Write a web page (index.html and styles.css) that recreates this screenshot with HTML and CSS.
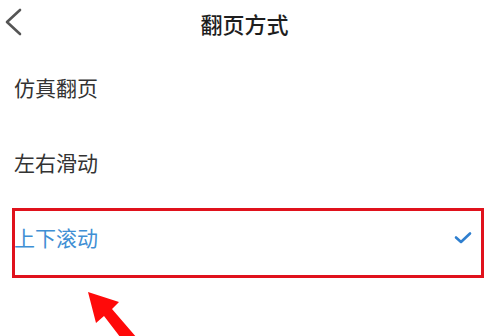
FILE: index.html
```html
<!DOCTYPE html>
<html lang="zh">
<head>
<meta charset="utf-8">
<link rel="stylesheet" href="styles.css">
</head>
<body>
<div class="page">
  <header class="topbar">
    <svg class="back" width="24" height="30" viewBox="0 0 24 30">
      <polyline points="17,3 4,15 17,27" fill="none" stroke="#555" stroke-width="2.6" stroke-linecap="round" stroke-linejoin="round"/>
    </svg>
    <h1 class="title">翻页方式</h1>
  </header>
  <ul class="options">
    <li class="option">仿真翻页</li>
    <li class="option">左右滑动</li>
    <li class="option selected">上下滚动
      <svg class="check" width="18" height="14" viewBox="0 0 18 14">
        <polyline points="2,6.5 7,11 16,2.5" fill="none" stroke="#2f7fcf" stroke-width="2.6" stroke-linecap="round" stroke-linejoin="round"/>
      </svg>
    </li>
  </ul>
  <div class="highlight"></div>
  <svg class="arrow" width="489" height="336" viewBox="0 0 489 336">
    <polygon points="88,292 119,302 112,309 137,338 127,346 104,316 96,323" fill="#ff0a0a"/>
  </svg>
</div>
</body>
</html>
```

FILE: styles.css
```css
* { box-sizing: border-box; }
html, body {
  margin: 0;
  padding: 0;
  background: #fff;
}
body {
  font-family: "Noto Sans CJK SC", "Noto Sans", sans-serif;
  width: 489px;
  height: 336px;
  overflow: hidden;
}
.page {
  position: relative;
  width: 489px;
  height: 336px;
}
.topbar {
  position: relative;
  height: 45px;
  display: flex;
  align-items: center;
  justify-content: center;
}
.back {
  position: absolute;
  left: 3px;
  top: 7px;
}
.title {
  margin: 0;
  font-size: 22px;
  font-weight: 500;
  color: #1e1e1e;
  line-height: 1;
}
.options {
  list-style: none;
  margin: 0;
  padding: 5px 0 0 0;
}
.option {
  height: 75px;
  display: flex;
  align-items: center;
  justify-content: space-between;
  padding: 0 17px 0 14px;
  font-size: 21px;
  color: #333;
  line-height: 1;
}
.option.selected {
  color: #3f8fd4;
}
.highlight {
  position: absolute;
  left: 12px;
  top: 208px;
  width: 472px;
  height: 70px;
  border: 3px solid #e0121c;
}
.arrow {
  position: absolute;
  left: 0;
  top: 0;
}
```
